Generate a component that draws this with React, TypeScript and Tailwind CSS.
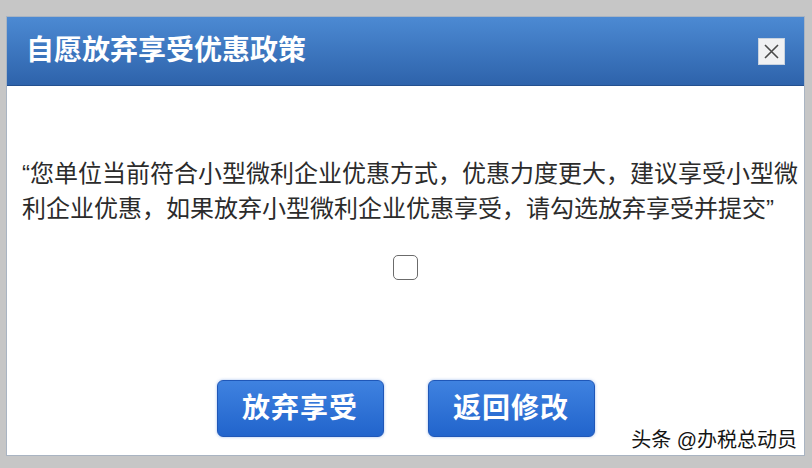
import * as React from "react";

const FONT = "font-['Liberation_Sans','Noto_Sans_CJK_SC',sans-serif]";

const CloseButton = () => (
  <button className="flex h-[27px] w-[27px] items-center justify-center border border-[#c9d3df] bg-[#f0f1f3]">
    <svg width="17" height="17" viewBox="0 0 17 17">
      <path d="M2 2 L15 15 M15 2 L2 15" stroke="#4a4a4a" strokeWidth="1.6" />
    </svg>
  </button>
);

const ActionButton = ({ label }: { label: string }) => (
  <button
    className={`${FONT} h-[57px] w-[167px] rounded-[6px] border border-[#1f57b8] bg-gradient-to-b from-[#3f82e0] to-[#2164cc] text-[28px] font-bold tracking-[1px] text-white shadow-[0_0_3px_rgba(60,120,220,0.5)]`}
  >
    {label}
  </button>
);

export default function App() {
  return (
    <div className="relative h-[468px] w-[812px] overflow-hidden bg-[#c6c6c6] pb-[12px] pl-[6px] pr-[7px] pt-[16px]">
      <div className="flex h-full flex-col border border-[#a9b4c2] bg-white">
        {/* header */}
        <div className="flex h-[69px] items-center justify-between border-b border-[#24508f] bg-gradient-to-b from-[#4c8ad3] to-[#2e63ab] pl-[19px] pr-[19px]">
          <h1 className={`${FONT} text-[28px] font-bold text-white`}>自愿放弃享受优惠政策</h1>
          <CloseButton />
        </div>

        {/* body */}
        <div className="flex flex-1 flex-col px-[15px] pt-[70px]">
          <p className={`${FONT} whitespace-nowrap text-[24px] leading-[35px] text-[#2b2b2b]`}>
            “您单位当前符合小型微利企业优惠方式，优惠力度更大，建议享受小型微
            <br />
            利企业优惠，如果放弃小型微利企业优惠享受，请勾选放弃享受并提交”
          </p>
          <div className="mt-[29px] flex justify-center">
            <input
              type="checkbox"
              className="h-[25px] w-[25px] appearance-none rounded-[5px] border-[1.5px] border-[#6b6b6b] bg-white"
            />
          </div>
          <div className="mt-[100px] flex justify-center gap-[44px]">
            <ActionButton label="放弃享受" />
            <ActionButton label="返回修改" />
          </div>
        </div>
      </div>

      <span
        className={`${FONT} absolute bottom-[13px] right-[15px] text-[20px] text-[#141414] [text-shadow:0_0_2px_#fff,0_0_2px_#fff]`}
      >
        头条 @办税总动员
      </span>
    </div>
  );
}
